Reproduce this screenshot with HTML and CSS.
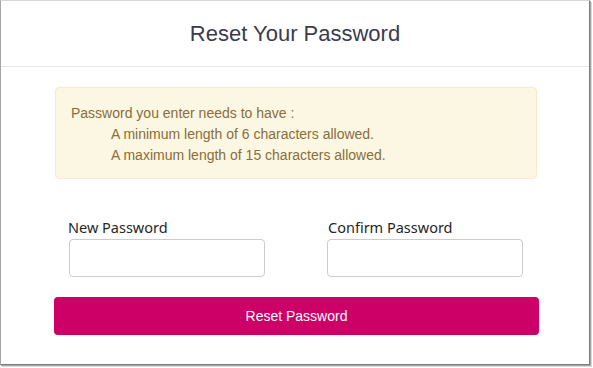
FILE: index.html
```html
<!DOCTYPE html>
<html>
<head>
<meta charset="utf-8">
<link rel="stylesheet" href="styles.css">
<title>Reset Your Password</title>
</head>
<body>
<div class="window">
  <header class="header">
    <h1 class="title">Reset Your Password</h1>
  </header>
  <main class="content">
    <div class="alert">
      <p class="alert-lead">Password you enter needs to have :</p>
      <p class="alert-item">A minimum length of 6 characters allowed.</p>
      <p class="alert-item">A maximum length of 15 characters allowed.</p>
    </div>
    <form class="form">
      <div class="fields">
        <div class="field">
          <label class="label" for="newpw">New Password</label>
          <input class="input" id="newpw" type="password">
        </div>
        <div class="field">
          <label class="label" for="confpw">Confirm Password</label>
          <input class="input" id="confpw" type="password">
        </div>
      </div>
      <button class="btn" type="button">Reset Password</button>
    </form>
  </main>
</div>
</body>
</html>
```
FILE: styles.css
```css
* { box-sizing: border-box; }
html, body { margin: 0; padding: 0; background: #ffffff; }
body { width: 593px; height: 368px; overflow: hidden; font-family: "Liberation Sans", Arial, sans-serif; }

.window {
  width: 590px;
  height: 365px;
  background: #ffffff;
  border-left: 1px solid #a6a6a6;
  border-top: 1px solid #d6d6d6;
  border-right: 1px solid #7c7c7c;
  border-bottom: 1px solid #7c7c7c;
  box-shadow: 1px 1px 0 #a8a8a8, 2px 2px 0 #d8d8d8;
}

.header {
  height: 66px;
  border-bottom: 1px solid #e6e6e6;
  display: flex;
  align-items: center;
  justify-content: center;
}
.title {
  margin: 0;
  font-family: "Liberation Sans", Arial, sans-serif;
  font-weight: normal;
  font-size: 22px;
  color: #3b3b4e;
}

.content {
  width: 485px;
  margin-left: 53px;
  padding-top: 20px;
}

.alert {
  margin: 0 2px 0 1px;
  background: #fcf7e2;
  border: 1px solid #f8ebcb;
  border-radius: 4px;
  padding: 15px 15px 12px;
  color: #8a6d3b;
  font-size: 14px;
  line-height: 21px;
}
.alert p { margin: 0; }
.alert-item { padding-left: 40px; }

.form { margin-top: 38px; }
.fields {
  display: grid;
  grid-template-columns: 196px 196px;
  column-gap: 62px;
  padding-left: 15px;
}
.field { display: flex; flex-direction: column; }
.label {
  font-family: "Noto Sans", "Open Sans", sans-serif;
  font-size: 14.5px;
  line-height: 20px;
  color: #262626;
  margin: 0 0 2px -1px;
}
.field + .field .label { margin-left: 1px; }
.input {
  width: 196px;
  height: 38px;
  border: 1px solid #cccccc;
  border-radius: 4px;
  background: #ffffff;
  margin: 0;
  padding: 6px 12px;
}

.btn {
  display: block;
  width: 485px;
  height: 38px;
  margin-top: 20px;
  border: none;
  border-radius: 4px;
  background: #cc0066;
  color: #ffffff;
  font-family: "Liberation Sans", Arial, sans-serif;
  font-size: 14px;
  padding: 0;
}
```
